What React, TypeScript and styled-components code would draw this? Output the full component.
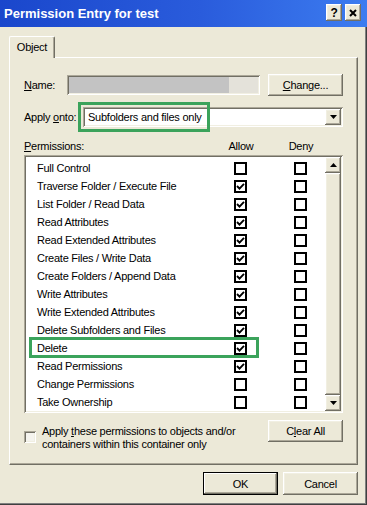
import styled, { createGlobalStyle } from 'styled-components';

const GlobalStyle = createGlobalStyle`
  html, body {
    margin: 0;
    padding: 0;
    background: #ece9d8;
  }
  body {
    font-family: "Liberation Sans", Arial, sans-serif;
    font-size: 11px;
    letter-spacing: -0.25px;
    color: #000;
  }
`;

interface Perm {
  name: string;
  allow: boolean;
  mark?: boolean;
}

const perms: Perm[] = [
  { name: 'Full Control', allow: false },
  { name: 'Traverse Folder / Execute File', allow: true },
  { name: 'List Folder / Read Data', allow: true },
  { name: 'Read Attributes', allow: true },
  { name: 'Read Extended Attributes', allow: true },
  { name: 'Create Files / Write Data', allow: true },
  { name: 'Create Folders / Append Data', allow: true },
  { name: 'Write Attributes', allow: true },
  { name: 'Write Extended Attributes', allow: true },
  { name: 'Delete Subfolders and Files', allow: true },
  { name: 'Delete', allow: true, mark: true },
  { name: 'Read Permissions', allow: true },
  { name: 'Change Permissions', allow: false },
  { name: 'Take Ownership', allow: false },
];

const raised = `
  background: #ece9d8;
  box-shadow: inset -1px -1px 0 #716f64, inset 1px 1px 0 #fff,
    inset -2px -2px 0 #aca899, inset 2px 2px 0 #f1efe2;
`;

const sunken = `
  box-shadow: inset 1px 1px 0 #aca899, inset -1px -1px 0 #fff,
    inset 2px 2px 0 #716f64, inset -2px -2px 0 #f1efe2;
`;

const Tick = () => (
  <svg width="9" height="9" viewBox="0 0 9 9">
    <path d="M1 4 L3.5 6.6 L8 1.8" fill="none" stroke="#000" strokeWidth="1.9" />
  </svg>
);

const Arrow = ({ up }: { up?: boolean }) => (
  <svg width="7" height="4" viewBox="0 0 7 4">
    <path d={up ? 'M0 4 L3.5 0 L7 4 Z' : 'M0 0 L7 0 L3.5 4 Z'} fill="#000" />
  </svg>
);

const App = () => {
  return (
    <>
      <GlobalStyle />
      <Window>
        <TitleBar>
          <Title>Permission Entry for test</Title>
          <TitleButtons>
            <TitleBtn>?</TitleBtn>
            <TitleBtn>
              <svg width="8" height="8" viewBox="0 0 8 8">
                <path d="M1 1 L7 7 M7 1 L1 7" stroke="#000" strokeWidth="2" />
              </svg>
            </TitleBtn>
          </TitleButtons>
        </TitleBar>
        <Body>
          <TabStrip>
            <Tab>Object</Tab>
          </TabStrip>
          <Panel>
            <FieldRow>
              <Label width={43}>
                <u>N</u>ame:
              </Label>
              <NameField />
              <Button>
                <u>C</u>hange...
              </Button>
            </FieldRow>
            <ApplyRow>
              <Label width={59}>
                Apply <u>o</u>nto:
              </Label>
              <Combo>
                <ComboText>Subfolders and files only</ComboText>
                <ComboBtn>
                  <Arrow />
                </ComboBtn>
                <Highlight />
              </Combo>
            </ApplyRow>
            <ListHeader>
              <span>
                <u>P</u>ermissions:
              </span>
              <ColHead>Allow</ColHead>
              <ColHead>Deny</ColHead>
            </ListHeader>
            <ListBox>
              <Rows>
                {perms.map((p) => (
                  <Row key={p.name}>
                    <span>{p.name}</span>
                    <Check>{p.allow && <Tick />}</Check>
                    <Check />
                    {p.mark && <RowHighlight />}
                  </Row>
                ))}
              </Rows>
              <ScrollBar>
                <ScrollBtn>
                  <Arrow up />
                </ScrollBtn>
                <Thumb />
                <ScrollBtn>
                  <Arrow />
                </ScrollBtn>
              </ScrollBar>
            </ListBox>
            <BottomRow>
              <ApplyOption>
                <SmallCheck />
                <OptionText>
                  Apply <u>t</u>hese permissions to objects and/or
                  <br />
                  containers within this container only
                </OptionText>
              </ApplyOption>
              <Button>
                C<u>l</u>ear All
              </Button>
            </BottomRow>
          </Panel>
          <Footer>
            <Button tall isDefault>
              OK
            </Button>
            <Button tall>Cancel</Button>
          </Footer>
        </Body>
      </Window>
    </>
  );
};

export default App;

const Window = styled.div`
  width: 367px;
  height: 505px;
  box-sizing: border-box;
  background: #ece9d8;
  box-shadow: inset -1px -1px 0 #404040, inset -2px -2px 0 #808080;
`;

const TitleBar = styled.div`
  height: 27px;
  display: flex;
  align-items: center;
  justify-content: space-between;
  padding: 0 6px 0 4px;
  background: linear-gradient(90deg, #1a47cc 0%, #2a5cdc 55%, #3c7cf0 100%);
`;

const Title = styled.div`
  color: #fff;
  font-weight: bold;
  font-size: 13px;
  letter-spacing: 0;
  padding-bottom: 1px;
`;

const TitleButtons = styled.div`
  display: flex;
  gap: 3px;
  padding-bottom: 2px;
`;

const TitleBtn = styled.div`
  width: 16px;
  height: 17px;
  display: flex;
  align-items: center;
  justify-content: center;
  font-weight: bold;
  font-size: 12px;
  ${raised}
`;

const Body = styled.div`
  padding: 9px 0 0 9px;
  width: 349px;
`;

const TabStrip = styled.div`
  display: flex;
  height: 21px;
`;

const Tab = styled.div`
  position: relative;
  z-index: 1;
  width: 46px;
  height: 22px;
  box-sizing: border-box;
  display: flex;
  justify-content: center;
  padding-top: 4px;
  background: #ece9d8;
  border-top: 1px solid #fff;
  border-left: 1px solid #fff;
  border-right: 1px solid #716f64;
  box-shadow: inset -1px 0 0 #aca899;
  border-radius: 2px 2px 0 0;
`;

const Panel = styled.div`
  height: 408px;
  box-sizing: border-box;
  padding: 16px 14px 0 14px;
  border-top: 1px solid #fff;
  border-left: 1px solid #fff;
  border-right: 1px solid #716f64;
  border-bottom: 1px solid #716f64;
  box-shadow: inset -1px -1px 0 #aca899;
`;

const FieldRow = styled.div`
  display: flex;
  align-items: center;
  height: 22px;
`;

const ApplyRow = styled(FieldRow)`
  margin-top: 11px;
  height: 20px;
`;

const Label = styled.div<{ width: number }>`
  width: ${(p) => p.width}px;
  flex-shrink: 0;
`;

const NameField = styled.div`
  flex: 1;
  height: 20px;
  margin-right: 8px;
  background: linear-gradient(90deg, #c3c3c3 0%, #c3c3c3 84%, #e4e2da 84%);
  ${sunken}
`;

const Button = styled.div<{ tall?: boolean; isDefault?: boolean }>`
  width: 75px;
  height: ${(p) => (p.tall ? 23 : 22)}px;
  flex-shrink: 0;
  display: flex;
  align-items: center;
  justify-content: center;
  box-sizing: border-box;
  background: #ece9d8;
  box-shadow: ${(p) =>
    p.isDefault
      ? 'inset 0 0 0 1px #000, inset -2px -2px 0 #716f64, inset 2px 2px 0 #fff, inset -3px -3px 0 #aca899'
      : 'inset -1px -1px 0 #716f64, inset 1px 1px 0 #fff, inset -2px -2px 0 #aca899, inset 2px 2px 0 #f1efe2'};
`;

const Combo = styled.div`
  position: relative;
  flex: 1;
  height: 20px;
  display: flex;
  align-items: center;
  background: #fff;
  ${sunken}
`;

const ComboText = styled.span`
  flex: 1;
  padding-left: 5px;
`;

const ComboBtn = styled.div`
  width: 16px;
  height: 16px;
  margin-right: 2px;
  display: flex;
  align-items: center;
  justify-content: center;
  ${raised}
`;

const Highlight = styled.div`
  position: absolute;
  left: -5px;
  top: -5px;
  width: 132px;
  height: 30px;
  box-sizing: border-box;
  border: 3px solid #3ba35b;
  pointer-events: none;
`;

const ListHeader = styled.div`
  margin-top: 12px;
  height: 14px;
  line-height: 14px;
  display: grid;
  grid-template-columns: 1fr 60px 60px;
  padding-right: 12px;
`;

const ColHead = styled.span`
  text-align: center;
`;

const ListBox = styled.div`
  margin-top: 2px;
  height: 258px;
  box-sizing: border-box;
  padding: 2px;
  display: flex;
  background: #fff;
  ${sunken}
`;

const Rows = styled.div`
  flex: 1;
  padding-top: 2px;
  overflow: hidden;
`;

const Row = styled.div`
  position: relative;
  height: 18px;
  display: grid;
  grid-template-columns: 1fr 13px 13px;
  column-gap: 47px;
  align-items: center;
  padding: 0 18px 0 11px;
`;

const RowHighlight = styled.div`
  position: absolute;
  left: 3px;
  top: -2px;
  width: 230px;
  height: 21px;
  box-sizing: border-box;
  border: 3px solid #3ba35b;
`;

const Check = styled.span`
  width: 13px;
  height: 13px;
  box-sizing: border-box;
  border: 2px solid #000;
  background: #fff;
  display: flex;
  align-items: center;
  justify-content: center;
`;

const ScrollBar = styled.div`
  width: 16px;
  display: flex;
  flex-direction: column;
  background: #f4f3ee;
`;

const ScrollBtn = styled.div`
  height: 16px;
  display: flex;
  align-items: center;
  justify-content: center;
  ${raised}
`;

const Thumb = styled.div`
  flex: 1;
  ${raised}
`;

const BottomRow = styled.div`
  margin-top: 7px;
  display: flex;
  justify-content: space-between;
  align-items: flex-start;
`;

const ApplyOption = styled.div`
  display: flex;
  gap: 6px;
  margin-top: 5px;
`;

const SmallCheck = styled.span`
  width: 12px;
  height: 12px;
  margin-top: 6px;
  flex-shrink: 0;
  background: #f5f4ee;
  ${sunken}
`;

const OptionText = styled.div`
  line-height: 13px;
`;

const Footer = styled.div`
  display: flex;
  justify-content: flex-end;
  gap: 5px;
  margin-top: 7px;
`;
